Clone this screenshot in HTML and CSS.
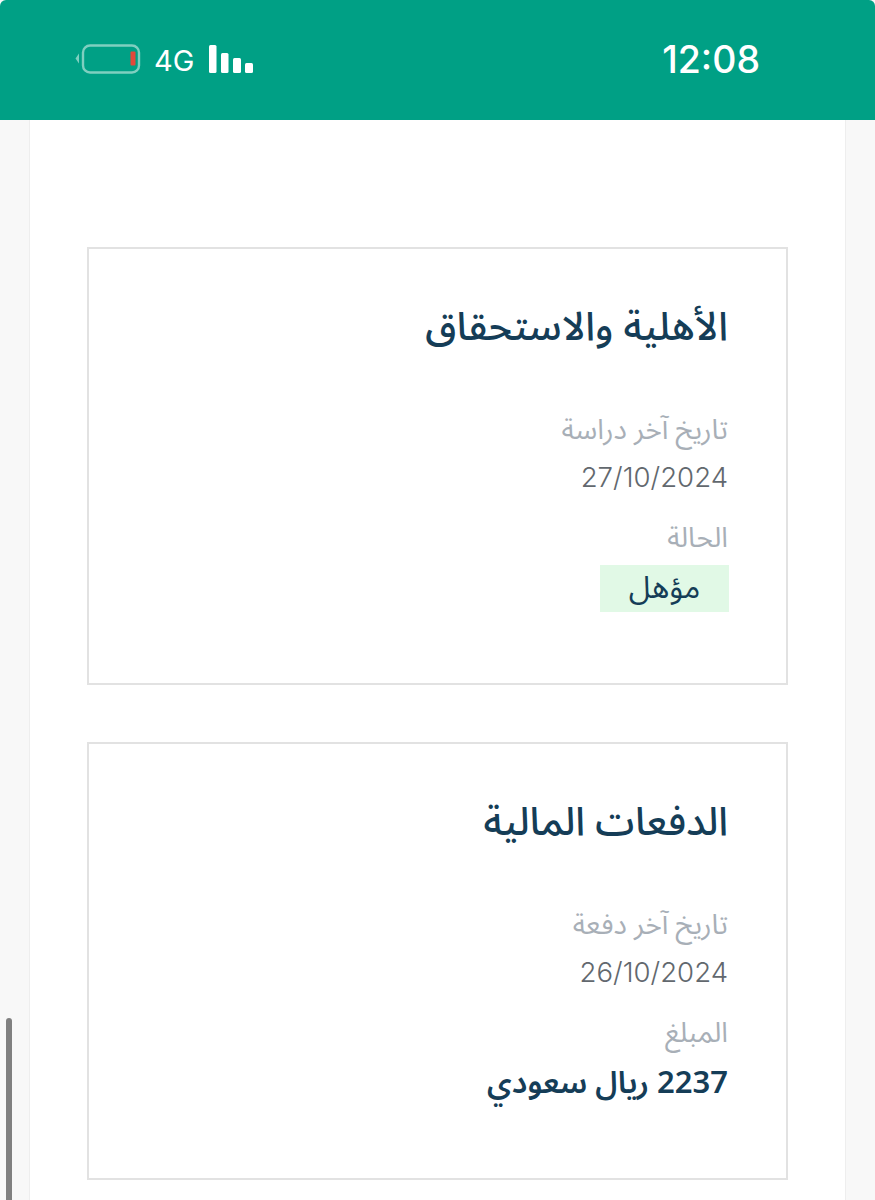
FILE: index.html
```html
<!DOCTYPE html>
<html lang="ar" dir="rtl">
<head>
<meta charset="utf-8">
<title>الأهلية والاستحقاق</title>
<link rel="stylesheet" href="styles.css">
</head>
<body>
<header class="status" dir="ltr">
  <div class="status-left">
    <svg class="battery" width="66" height="30" viewBox="0 0 66 30" aria-hidden="true">
      <path d="M4 9.5 L0.5 14.5 L4 19.5 Z" fill="#7fcfc0"/>
      <rect x="8" y="1.5" width="56" height="27" rx="7" fill="none" stroke="#7fcfc0" stroke-width="2.4"/>
      <rect x="55.5" y="7.5" width="5" height="14" rx="1" fill="#e2483a"/>
    </svg>
    <span class="net">4G</span>
    <svg class="signal" width="46" height="28" viewBox="0 0 46 28" aria-hidden="true">
      <rect x="0" y="0" width="7.5" height="28" rx="1.5" fill="#fff"/>
      <rect x="12" y="8" width="7.5" height="20" rx="1.5" fill="#fff"/>
      <rect x="24" y="13" width="8" height="15" rx="1.5" fill="#fff"/>
      <rect x="36" y="18" width="8" height="10" rx="1.5" fill="#fff"/>
    </svg>
  </div>
  <div class="clock">12:08</div>
</header>
<div class="scrollbar"></div>
<main class="panel">
  <section class="card">
    <h2 class="title">الأهلية والاستحقاق</h2>
    <div class="label label-first">تاريخ آخر دراسة</div>
    <div class="value">27/10/2024</div>
    <div class="label">الحالة</div>
    <div class="badge">مؤهل</div>
  </section>
  <section class="card">
    <h2 class="title">الدفعات المالية</h2>
    <div class="label label-first">تاريخ آخر دفعة</div>
    <div class="value">26/10/2024</div>
    <div class="label">المبلغ</div>
    <div class="amount">2237 ريال سعودي</div>
  </section>
</main>
</body>
</html>
```
FILE: styles.css
```css
* { box-sizing: border-box; }
html, body { margin: 0; padding: 0; height: 1200px; overflow: hidden; }
body {
  background: #f8f8f8;
  font-family: "Noto Sans Arabic", "Noto Sans", "DejaVu Sans", sans-serif;
  position: relative;
}
.status {
  height: 120px;
  background: #00a085;
  border-radius: 6px 6px 0 0;
  display: flex;
  justify-content: space-between;
  align-items: center;
  padding: 0 115px 0 75px;
  color: #fff;
}
.status-left { display: flex; align-items: flex-start; height: 30px; margin-top: -3px; }
.net { font: 29px/32px Inter, "Liberation Sans", Arial, sans-serif; margin: 1px 15px 0 13px; }
.signal { margin-top: 1px; }
.clock { font: 500 37.5px Inter, "Liberation Sans", sans-serif; margin-top: -2px; }
.panel {
  width: 817px;
  height: 1080px;
  margin: 0 29px 0 29px;
  background: #fff;
  border-left: 1px solid #eeeeee;
  border-right: 1px solid #eeeeee;
  padding: 127px 57px 0 57px;
  display: flex;
  flex-direction: column;
  gap: 57px;
}
.card {
  height: 438px;
  border: 2px solid #e2e2e2;
  padding: 53px 58px 0;
  text-align: right;
}
.title {
  margin: 0;
  font-size: 39.5px;
  line-height: 52px;
  font-weight: 500;
  color: #153d57;
}
.label {
  font-size: 28px;
  line-height: 40px;
  color: #a8afb7;
  margin-top: 22px;
}
.label-first { margin-top: 57px; }
.value {
  font: 300 27.6px/40px Inter, "Liberation Sans", Arial, sans-serif;
  color: #62686e;
  margin-top: 6px;
}
.badge {
  display: block;
  width: 129px;
  height: 47px;
  margin-top: 6px;
  margin-right: -1px;
  background: #e1f9e6;
  color: #153d57;
  font-size: 31px;
  line-height: 47px;
  text-align: center;
}
.amount {
  font-size: 31px;
  font-weight: 600;
  line-height: 44px;
  color: #153d57;
  margin-top: 7px;
}
.scrollbar {
  position: absolute;
  left: 6px;
  top: 1018px;
  width: 6px;
  height: 182px;
  background: #808080;
  border-radius: 3px 3px 0 0;
}
```
